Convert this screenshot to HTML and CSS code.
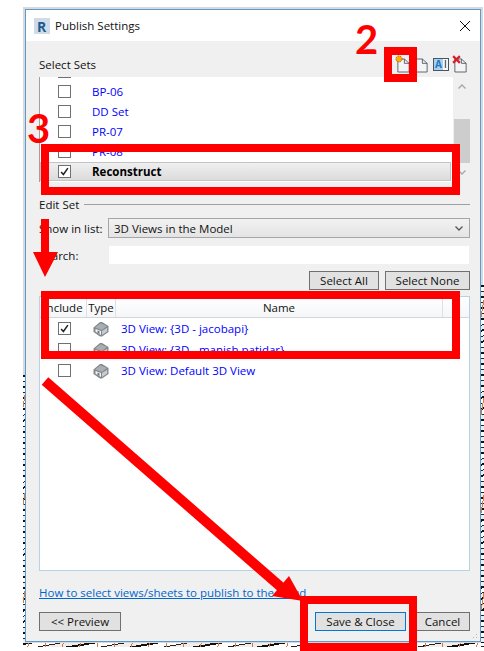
FILE: index.html
```html
<!DOCTYPE html>
<html lang="en">
<head>
    <meta charset="UTF-8">
    <title>Publish Settings</title>
    <link rel="stylesheet" href="styles.css">
</head>
<body>
    <svg class="defs" width="0" height="0">
        <symbol id="house" viewBox="0 0 16 16">
            <path d="M7 1H9L15.5 5V11L9 15.5H7L0.5 11V6.5Z" fill="#82888d"/>
            <path d="M7.5 2.2L2 6.6L9 9L14 5Z" fill="#a9aeb2"/>
            <path d="M2.5 8L8 10V14L2.5 10.8Z" fill="#f4f5f6"/>
            <path d="M4.5 9.5L6.5 10.3V13L4.5 11.9Z" fill="#71777c"/>
            <path d="M9 10L14.2 6.8V10.6L9 14Z" fill="#c9ccce"/>
        </symbol>
        <symbol id="check" viewBox="0 0 13 13">
            <path d="M2.5 7L5.2 10L10.5 2.5" fill="none" stroke="#222" stroke-width="1.8"/>
        </symbol>
        <symbol id="page" viewBox="0 0 15 17">
            <path d="M1 1H8.5L14 6V16H1Z" fill="#f2f4f6" stroke="#4a5560"/>
            <path d="M8.5 1V6H14" fill="none" stroke="#4a5560"/>
        </symbol>
    </svg>

    <div class="window">
        <div class="titlebar">
            <svg class="app-icon" viewBox="0 0 16 16">
                <rect width="16" height="16" fill="#cfdbe8"/>
                <text x="3" y="13.5" class="app-letter">R</text>
            </svg>
            <span class="title">Publish Settings</span>
            <svg class="close" viewBox="0 0 10 10">
                <path d="M0 0L10 10M10 0L0 10" stroke="#111" stroke-width="1"/>
            </svg>
        </div>

        <div class="content">
            <div class="sets-head">
                <span>Select Sets</span>
                <div class="tools">
                    <span class="tool new">
                        <svg class="page"><use href="#page"/></svg>
                        <svg class="badge" viewBox="0 0 8 8">
                            <circle cx="4" cy="4" r="3" fill="#f5b400" stroke="#d9480f" stroke-dasharray="1.5 1"/>
                        </svg>
                    </span>
                    <span class="tool copy">
                        <svg class="page"><use href="#page"/></svg>
                    </span>
                    <span class="tool rename">
                        <span class="rename-a">A</span>
                        <span class="rename-i">I</span>
                    </span>
                    <span class="tool del">
                        <svg class="page"><use href="#page"/></svg>
                        <svg class="badge" viewBox="0 0 8 8">
                            <path d="M1 1L7 7M7 1L1 7" stroke="#d3222a" stroke-width="2"/>
                        </svg>
                    </span>
                </div>
            </div>

            <div class="sets">
                <div class="sets-list">
                    <div class="sets-scroll">
                        <div class="set"><span class="box"></span></div>
                        <div class="set"><span class="box"></span><span>BP-06</span></div>
                        <div class="set"><span class="box"></span><span>DD Set</span></div>
                        <div class="set"><span class="box"></span><span>PR-07</span></div>
                        <div class="set"><span class="box"></span><span>PR-08</span></div>
                        <div class="set selected">
                            <span class="box"><svg class="tick"><use href="#check"/></svg></span>
                            <span>Reconstruct</span>
                        </div>
                    </div>
                </div>
                <div class="scrollbar">
                    <svg class="chev" viewBox="0 0 8 5"><path d="M0.5 4.5L4 1L7.5 4.5" fill="none" stroke="#a6a6a6" stroke-width="1.3"/></svg>
                    <div class="thumb"></div>
                    <svg class="chev" viewBox="0 0 8 5"><path d="M0.5 0.5L4 4L7.5 0.5" fill="none" stroke="#a6a6a6" stroke-width="1.3"/></svg>
                </div>
            </div>

            <div class="edit-head"><span>Edit Set</span><div class="rule"></div></div>

            <div class="field">
                <span class="field-label">Show in list:</span>
                <div class="select">
                    <span>3D Views in the Model</span>
                    <svg class="select-chev" viewBox="0 0 8 5"><path d="M0.5 0.5L4 4L7.5 0.5" fill="none" stroke="#555" stroke-width="1.3"/></svg>
                </div>
            </div>
            <div class="field search">
                <span class="field-label">Search:</span>
                <div class="input"></div>
            </div>

            <div class="select-btns">
                <button class="btn select-all">Select All</button>
                <button class="btn select-none">Select None</button>
            </div>

            <div class="table">
                <div class="thead">
                    <div class="th col-include">Include</div>
                    <div class="th col-type">Type</div>
                    <div class="th col-name">Name</div>
                    <div class="th col-end"></div>
                </div>
                <div class="tr">
                    <div class="col-include"><span class="box"><svg class="tick"><use href="#check"/></svg></span></div>
                    <div class="col-type"><svg class="house"><use href="#house"/></svg></div>
                    <div class="view-name">3D View: {3D - jacobapi}</div>
                </div>
                <div class="tr">
                    <div class="col-include"><span class="box"></span></div>
                    <div class="col-type"><svg class="house"><use href="#house"/></svg></div>
                    <div class="view-name">3D View: {3D - manish patidar}</div>
                </div>
                <div class="tr">
                    <div class="col-include"><span class="box"></span></div>
                    <div class="col-type"><svg class="house"><use href="#house"/></svg></div>
                    <div class="view-name">3D View: Default 3D View</div>
                </div>
            </div>

            <a class="help" href="#">How to select views/sheets to publish to the cloud</a>

            <div class="footer">
                <button class="btn preview">&lt;&lt; Preview</button>
                <button class="btn save">Save &amp; Close</button>
                <button class="btn cancel">Cancel</button>
            </div>
        </div>
        <div class="grip"></div>
    </div>

    <!-- backdrop showing around the dialog -->
    <div class="noise noise-left"></div>
    <div class="noise noise-right"></div>
    <div class="noise noise-bottom"></div>

    <!-- red annotations drawn on top of the screenshot -->
    <span class="step step-2">2</span>
    <span class="step step-3">3</span>
    <div class="mark mark-new"></div>
    <div class="mark mark-set"></div>
    <div class="mark mark-views"></div>
    <div class="mark mark-save"></div>
    <svg class="arrows" viewBox="0 0 484 651">
        <path d="M41 219H49V252H58L45 277L33 252H41Z" fill="#f00"/>
        <path d="M45 381L282 588" stroke="#f00" stroke-width="10"/>
        <path d="M289 576L272 596L303 601Z" fill="#f00"/>
    </svg>
</body>
</html>
```

FILE: styles.css
```css
* {
    margin: 0;
    padding: 0;
    box-sizing: border-box;
}

body {
    width: 484px;
    height: 651px;
    padding: 9px 3px 9px 25px;
    background: white;
    font-family: "Open Sans", sans-serif;
    font-size: 11.5px;
    color: #111;
    overflow: hidden;
    position: relative;
}

.defs {
    position: absolute;
}

.window {
    height: 633px;
    background: #f0f0f0;
    border: 1px solid #5b9bd0;
    box-shadow: 0 0 0 2px #d9d9d9;
    display: flex;
    flex-direction: column;
    position: relative;
}

.titlebar {
    height: 31px;
    flex: none;
    background: white;
    display: flex;
    align-items: center;
    padding: 0 10px 0 8px;
}

.app-icon {
    width: 16px;
    height: 16px;
    margin-right: 5px;
}

.app-letter {
    font-family: "Open Sans", sans-serif;
    font-size: 14px;
    font-weight: 700;
    fill: #1f5a8f;
}

.title {
    font-size: 11.5px;
    flex: 1;
}

.close {
    width: 10px;
    height: 10px;
}

.content {
    flex: 1;
    padding: 0 10px 0 13px;
    display: flex;
    flex-direction: column;
}

.sets-head {
    height: 36px;
    flex: none;
    display: flex;
    align-items: flex-end;
    justify-content: space-between;
    padding-bottom: 5px;
}

.tools {
    display: flex;
    align-items: center;
    gap: 4px;
    margin-bottom: -1px;
    padding-right: 3px;
}

.tool {
    width: 14px;
    height: 17px;
    position: relative;
    display: block;
}

.page {
    width: 13px;
    height: 15px;
    display: block;
    position: absolute;
    right: 0;
    bottom: 0;
}

.copy {
    margin-right: 1px;
}

.badge {
    width: 8px;
    height: 8px;
    position: absolute;
    left: -1px;
    top: -1px;
}

.del .badge {
    width: 9px;
    height: 9px;
}

.rename {
    width: 16px;
    height: 13px;
    border: 1px solid #4a5560;
    background: #f6f7f8;
    font-size: 10px;
    line-height: 11px;
    font-weight: 700;
    display: flex;
}

.rename-a {
    width: 9px;
    text-align: center;
    background: #a9d0ee;
    color: #1f78c8;
}

.rename-i {
    font-weight: 400;
    margin-left: 1px;
}

.sets {
    height: 105px;
    flex: none;
    display: flex;
}

.sets-list {
    width: 414px;
    background: white;
    border-left: 1px solid #a0a0a0;
    overflow: hidden;
}

.sets-scroll {
    margin-top: -16px;
}

.set {
    height: 20px;
    display: flex;
    align-items: center;
    padding-left: 18px;
    color: #0000ff;
    gap: 21px;
    margin-right: 2px;
}

.set.selected {
    height: 19px;
    color: black;
    font-weight: 700;
    background: linear-gradient(#efefef, #dcdcdc);
    border: 1px solid #c4c4c4;
    padding-left: 17px;
    margin-top: 1px;
}

.box {
    width: 13px;
    height: 13px;
    flex: none;
    border: 1px solid #707070;
    background: white;
    display: block;
}

.tick {
    width: 11px;
    height: 11px;
    display: block;
}

.scrollbar {
    flex: 1;
    margin-left: 1px;
    padding-top: 7px;
    display: flex;
    flex-direction: column;
    align-items: center;
}

.chev {
    width: 8px;
    height: 5px;
    flex: none;
}

.thumb {
    width: 100%;
    height: 44px;
    background: #cdcdcd;
    margin: 30px 0 7px;
}

.edit-head {
    height: 36px;
    flex: none;
    display: flex;
    align-items: center;
    gap: 5px;
    padding-top: 8px;
}

.rule {
    flex: 1;
    height: 1px;
    background: #a0a0a0;
}

.field {
    display: flex;
    align-items: center;
    height: 20px;
    flex: none;
}

.field-label {
    width: 69px;
    flex: none;
}

.select {
    flex: 1;
    height: 20px;
    border: 1px solid #a6a6a6;
    background: linear-gradient(#f2f2f2, #e4e4e4);
    display: flex;
    align-items: center;
    justify-content: space-between;
    padding: 0 6px 0 5px;
}

.select-chev {
    width: 8px;
    height: 5px;
}

.search {
    height: 18px;
    margin-top: 8px;
}

.input {
    flex: 1;
    height: 18px;
    background: white;
    margin: 0 1px;
}

.select-btns {
    display: flex;
    justify-content: flex-end;
    gap: 6px;
    margin-top: 7px;
    flex: none;
}

.btn {
    height: 19px;
    font-family: inherit;
    font-size: 11.5px;
    color: #111;
    background: #e1e1e1;
    border: 1px solid #707070;
}

.select-all {
    width: 70px;
}

.select-none {
    width: 85px;
}

.table {
    height: 275px;
    flex: none;
    margin-top: 6px;
    background: white;
    border: 1px solid #b5d3e7;
}

.thead {
    height: 21px;
    display: flex;
    padding-top: 2px;
    padding-right: 3px;
    border-bottom: 1px solid #d5d5d5;
    background: linear-gradient(white, #f4f6f8);
}

.th {
    line-height: 18px;
    text-align: center;
    border-right: 1px solid #e0e0e0;
}

.col-include {
    width: 47px;
    flex: none;
    display: flex;
    justify-content: center;
}

.tr .col-include {
    padding-left: 2px;
}

.col-type {
    width: 29px;
    flex: none;
    display: flex;
    justify-content: center;
}

.tr .col-type {
    padding-right: 2px;
}

.col-name {
    flex: 1;
    justify-content: center;
}

.col-end {
    width: 23px;
    border-right: none;
}

.tr {
    height: 21px;
    display: flex;
    align-items: center;
    color: #0000ff;
}

.house {
    width: 16px;
    height: 16px;
    display: block;
}

.view-name {
    padding-left: 5px;
}

.help {
    color: #0066cc;
    margin-top: 14px;
    line-height: 16px;
    flex: none;
}

.footer {
    display: flex;
    margin-top: 11px;
    flex: none;
}

.preview {
    width: 82px;
}

.save {
    width: 91px;
    margin-left: auto;
    border-color: #0078d7;
}

.cancel {
    width: 55px;
    margin-left: 9px;
}

.grip {
    position: absolute;
    right: 1px;
    bottom: 1px;
    width: 10px;
    height: 10px;
    background: radial-gradient(circle, #b5b5b5 1px, transparent 1px) 0 0 / 3px 3px;
    clip-path: polygon(100% 0, 100% 100%, 0 100%);
}

.noise {
    position: absolute;
    background:
        repeating-linear-gradient(100deg, transparent 0 5px, #d8783a 5px 6px, transparent 6px 17px),
        repeating-linear-gradient(170deg, #111 0 2px, white 2px 6px, #222 6px 7px, #eee 7px 11px);
}

.noise-left {
    left: 23px;
    top: 375px;
    width: 2px;
    height: 268px;
}

.noise-right {
    left: 481px;
    top: 285px;
    width: 3px;
    height: 362px;
}

.noise-bottom {
    left: 23px;
    top: 643px;
    width: 461px;
    height: 4px;
}

.step {
    position: absolute;
    font-family: Lato, sans-serif;
    font-weight: 700;
    font-size: 40px;
    line-height: 40px;
    color: #f00;
}

.step-2 {
    left: 355px;
    top: 19px;
}

.step-3 {
    left: 27px;
    top: 108px;
}

.mark {
    position: absolute;
    border: 8px solid #f00;
}

.mark-new {
    left: 384px;
    top: 47px;
    width: 33px;
    height: 35px;
}

.mark-set {
    left: 41px;
    top: 144px;
    width: 419px;
    height: 51px;
}

.mark-views {
    left: 41px;
    top: 291px;
    width: 419px;
    height: 68px;
}

.mark-save {
    left: 300px;
    top: 596px;
    width: 117px;
    height: 55px;
}

.arrows {
    position: absolute;
    left: 0;
    top: 0;
    width: 484px;
    height: 651px;
}
```
